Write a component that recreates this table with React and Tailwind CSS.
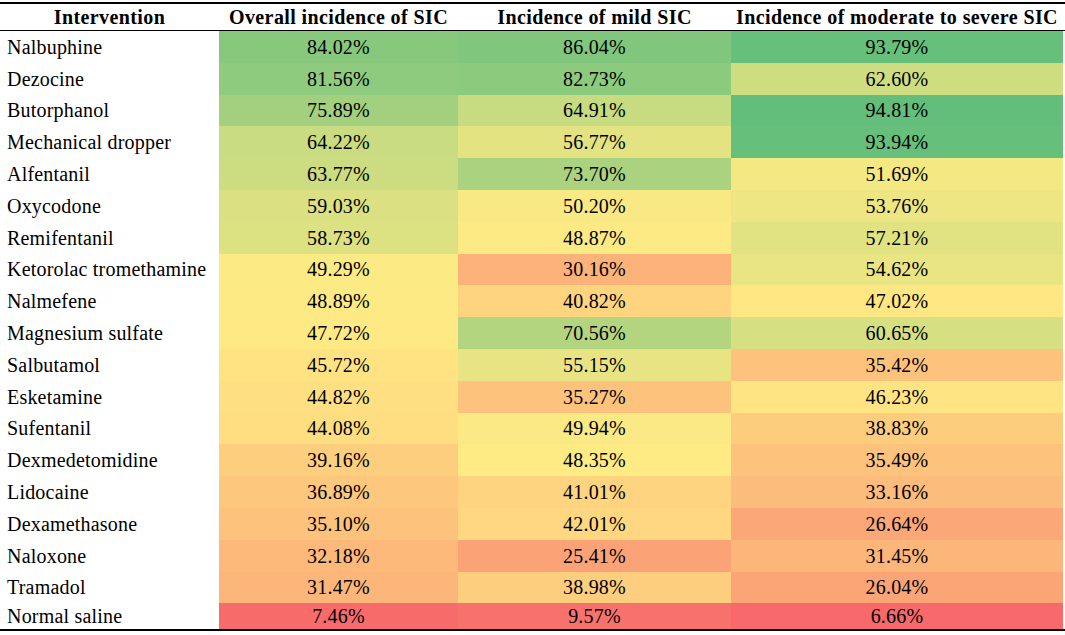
import React from "react";

const rows = [
  ["Nalbuphine", 84.02, 86.04, 93.79],
  ["Dezocine", 81.56, 82.73, 62.6],
  ["Butorphanol", 75.89, 64.91, 94.81],
  ["Mechanical dropper", 64.22, 56.77, 93.94],
  ["Alfentanil", 63.77, 73.7, 51.69],
  ["Oxycodone", 59.03, 50.2, 53.76],
  ["Remifentanil", 58.73, 48.87, 57.21],
  ["Ketorolac tromethamine", 49.29, 30.16, 54.62],
  ["Nalmefene", 48.89, 40.82, 47.02],
  ["Magnesium sulfate", 47.72, 70.56, 60.65],
  ["Salbutamol", 45.72, 55.15, 35.42],
  ["Esketamine", 44.82, 35.27, 46.23],
  ["Sufentanil", 44.08, 49.94, 38.83],
  ["Dexmedetomidine", 39.16, 48.35, 35.49],
  ["Lidocaine", 36.89, 41.01, 33.16],
  ["Dexamethasone", 35.1, 42.01, 26.64],
  ["Naloxone", 32.18, 25.41, 31.45],
  ["Tramadol", 31.47, 38.98, 26.04],
  ["Normal saline", 7.46, 9.57, 6.66],
];

const all = rows.flatMap((r) => r.slice(1)).sort((a, b) => a - b);
const min = all[0];
const max = all[all.length - 1];
const mid = all[Math.floor(all.length / 2)];
const RED = [248, 105, 107];
const YEL = [255, 235, 132];
const GRN = [99, 190, 123];

function mix(a, b, t) {
  return a.map((v, i) => Math.round(v + (b[i] - v) * t));
}
function color(v) {
  let c;
  if (v <= mid) c = mix(RED, YEL, (v - min) / (mid - min));
  else c = mix(YEL, GRN, (v - mid) / (max - mid));
  return `rgb(${c[0]},${c[1]},${c[2]})`;
}

const cols = "grid grid-cols-[219px_239px_273px_332px]";

export default function App() {
  return (
    <div className="w-[1065px] h-[635px] bg-white text-black overflow-hidden font-['Liberation_Serif','Times_New_Roman',serif]">
      <div className="pt-[2px]">
        <div className="border-t-2 border-black" />
        <div className={`${cols} h-[27px] items-center font-bold text-[20px] tracking-[0.4px] leading-none border-b border-black`}>
          <div className="text-center">Intervention</div>
          <div className="text-center">Overall incidence of SIC</div>
          <div className="text-center">Incidence of mild SIC</div>
          <div className="text-center">Incidence of moderate to severe SIC</div>
        </div>
        {rows.map((r, i) => (
          <div
            key={r[0]}
            className={`${cols} text-[20px] tracking-[0.2px] leading-none ${i === rows.length - 1 ? "h-[26px]" : "h-[31.8px]"}`}
          >
            <div className="flex items-center pl-[7px] whitespace-nowrap">{r[0]}</div>
            {r.slice(1).map((v, j) => (
              <div
                key={j}
                className="flex items-center justify-center"
                style={{ backgroundColor: color(v) }}
              >
                {v.toFixed(2)}%
              </div>
            ))}
          </div>
        ))}
        <div className="border-t-2 border-black" />
      </div>
    </div>
  );
}
